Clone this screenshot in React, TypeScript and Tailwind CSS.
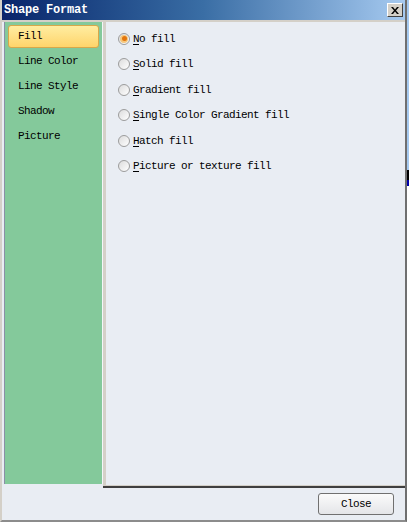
const mono = { fontFamily: '"Liberation Mono", "DejaVu Sans Mono", monospace' };

const navItems = ["Fill", "Line Color", "Line Style", "Shadow", "Picture"];

const fillOptions = [
  { key: "N", rest: "o fill", checked: true },
  { key: "S", rest: "olid fill" },
  { key: "G", rest: "radient fill" },
  { key: "S", rest: "ingle Color Gradient fill" },
  { key: "H", rest: "atch fill" },
  { key: "P", rest: "icture or texture fill" },
];

function Radio({ checked }: { checked?: boolean }) {
  return (
    <span className="w-[12px] h-[12px] rounded-full border border-[#9c9c9c] bg-gradient-to-br from-[#dcdcdc] to-[#ffffff] flex items-center justify-center shrink-0">
      {checked && (
        <span className="w-[8px] h-[8px] rounded-full bg-[#f6c77c] flex items-center justify-center">
          <span className="w-[5px] h-[5px] rounded-full bg-[#e2760e]" />
        </span>
      )}
    </span>
  );
}

export default function App() {
  return (
    <div className="w-[409px] h-[522px] flex bg-white overflow-hidden" style={mono}>
      <div className="w-[407px] h-full flex flex-col border-l-2 border-l-[#d4d0c8] border-r-2 border-r-[#6f6f6f] border-b-2 border-b-[#8c8c8c]">
        {/* Title bar */}
        <div className="h-[20px] flex items-center justify-between pl-[2px] pr-[2px] bg-gradient-to-r from-[#0a246a] via-[#3a6ea5] to-[#a6caf0]">
          <span className="text-white font-bold text-[12px] tracking-[-0.2px] leading-none">Shape Format</span>
          <span className="w-[16px] h-[14px] bg-[#d4d0c8] border border-t-white border-l-white border-r-[#404040] border-b-[#404040] flex items-center justify-center">
            <svg width="8" height="7" viewBox="0 0 8 7">
              <path d="M0 0h2l2 2.5L6 0h2L5 3.5 8 7H6L4 4.5 2 7H0l3-3.5z" fill="#000" />
            </svg>
          </span>
        </div>

        {/* Body */}
        <div className="flex-1 flex flex-col bg-[#e9edf3] border-t-2 border-t-[#d4d0c8]">
          <div className="flex h-[466px]">
            <div className="w-[99px] h-[462px] ml-[2px] bg-[#84c99b] border-l border-l-[#8a8fa6] border-r border-r-[#f4f6f8] pt-[2px] px-[3px]">
              {navItems.map((item, i) =>
                i === 0 ? (
                  <div key={item} className="h-[25px] flex items-center">
                    <div className="w-full h-[23px] flex items-center pl-[9px] rounded-[3px] border border-[#d8a74a] bg-gradient-to-b from-[#ffeda0] to-[#fed46a] text-[11px] tracking-[-0.6px] text-black">
                      {item}
                    </div>
                  </div>
                ) : (
                  <div key={item} className="h-[25px] flex items-center pl-[10px] text-[11px] tracking-[-0.6px] text-black">
                    {item}
                  </div>
                )
              )}
            </div>
            <div className="flex-1 h-[466px] border-l-[3px] border-l-[#d4d0c8] border-b-[3px] border-b-[#d4d0c8] relative bg-[#e9edf3] pl-[12px] pt-[4px]">
              <div className="absolute left-[-3px] right-0 bottom-[-3px] h-[2px] bg-[#3f3f3f]" />
              {fillOptions.map((o, i) => (
                <div key={i} className="h-[25.5px] flex items-center gap-[3px] text-[11px] tracking-[-0.6px] text-black">
                  <Radio checked={o.checked} />
                  <span>
                    <span className="underline underline-offset-2">{o.key}</span>
                    {o.rest}
                  </span>
                </div>
              ))}
            </div>
          </div>

          {/* Footer */}
          <div className="flex-1 flex items-center justify-end pr-[11px]">
            <button className="w-[76px] h-[22px] rounded-[3px] border border-[#707070] bg-gradient-to-b from-[#fbfbfb] to-[#e4e5e8] text-[11px] tracking-[-0.6px] text-black flex items-center justify-center">
              Close
            </button>
          </div>
        </div>
      </div>
      <div className="flex-1 flex flex-col">
        <div className="h-[170px] bg-[#a6caf0]" />
        <div className="h-[10px] bg-black" />
        <div className="h-[6px] bg-[#0000a8]" />
        <div className="flex-1 bg-white" />
      </div>
    </div>
  );
}
